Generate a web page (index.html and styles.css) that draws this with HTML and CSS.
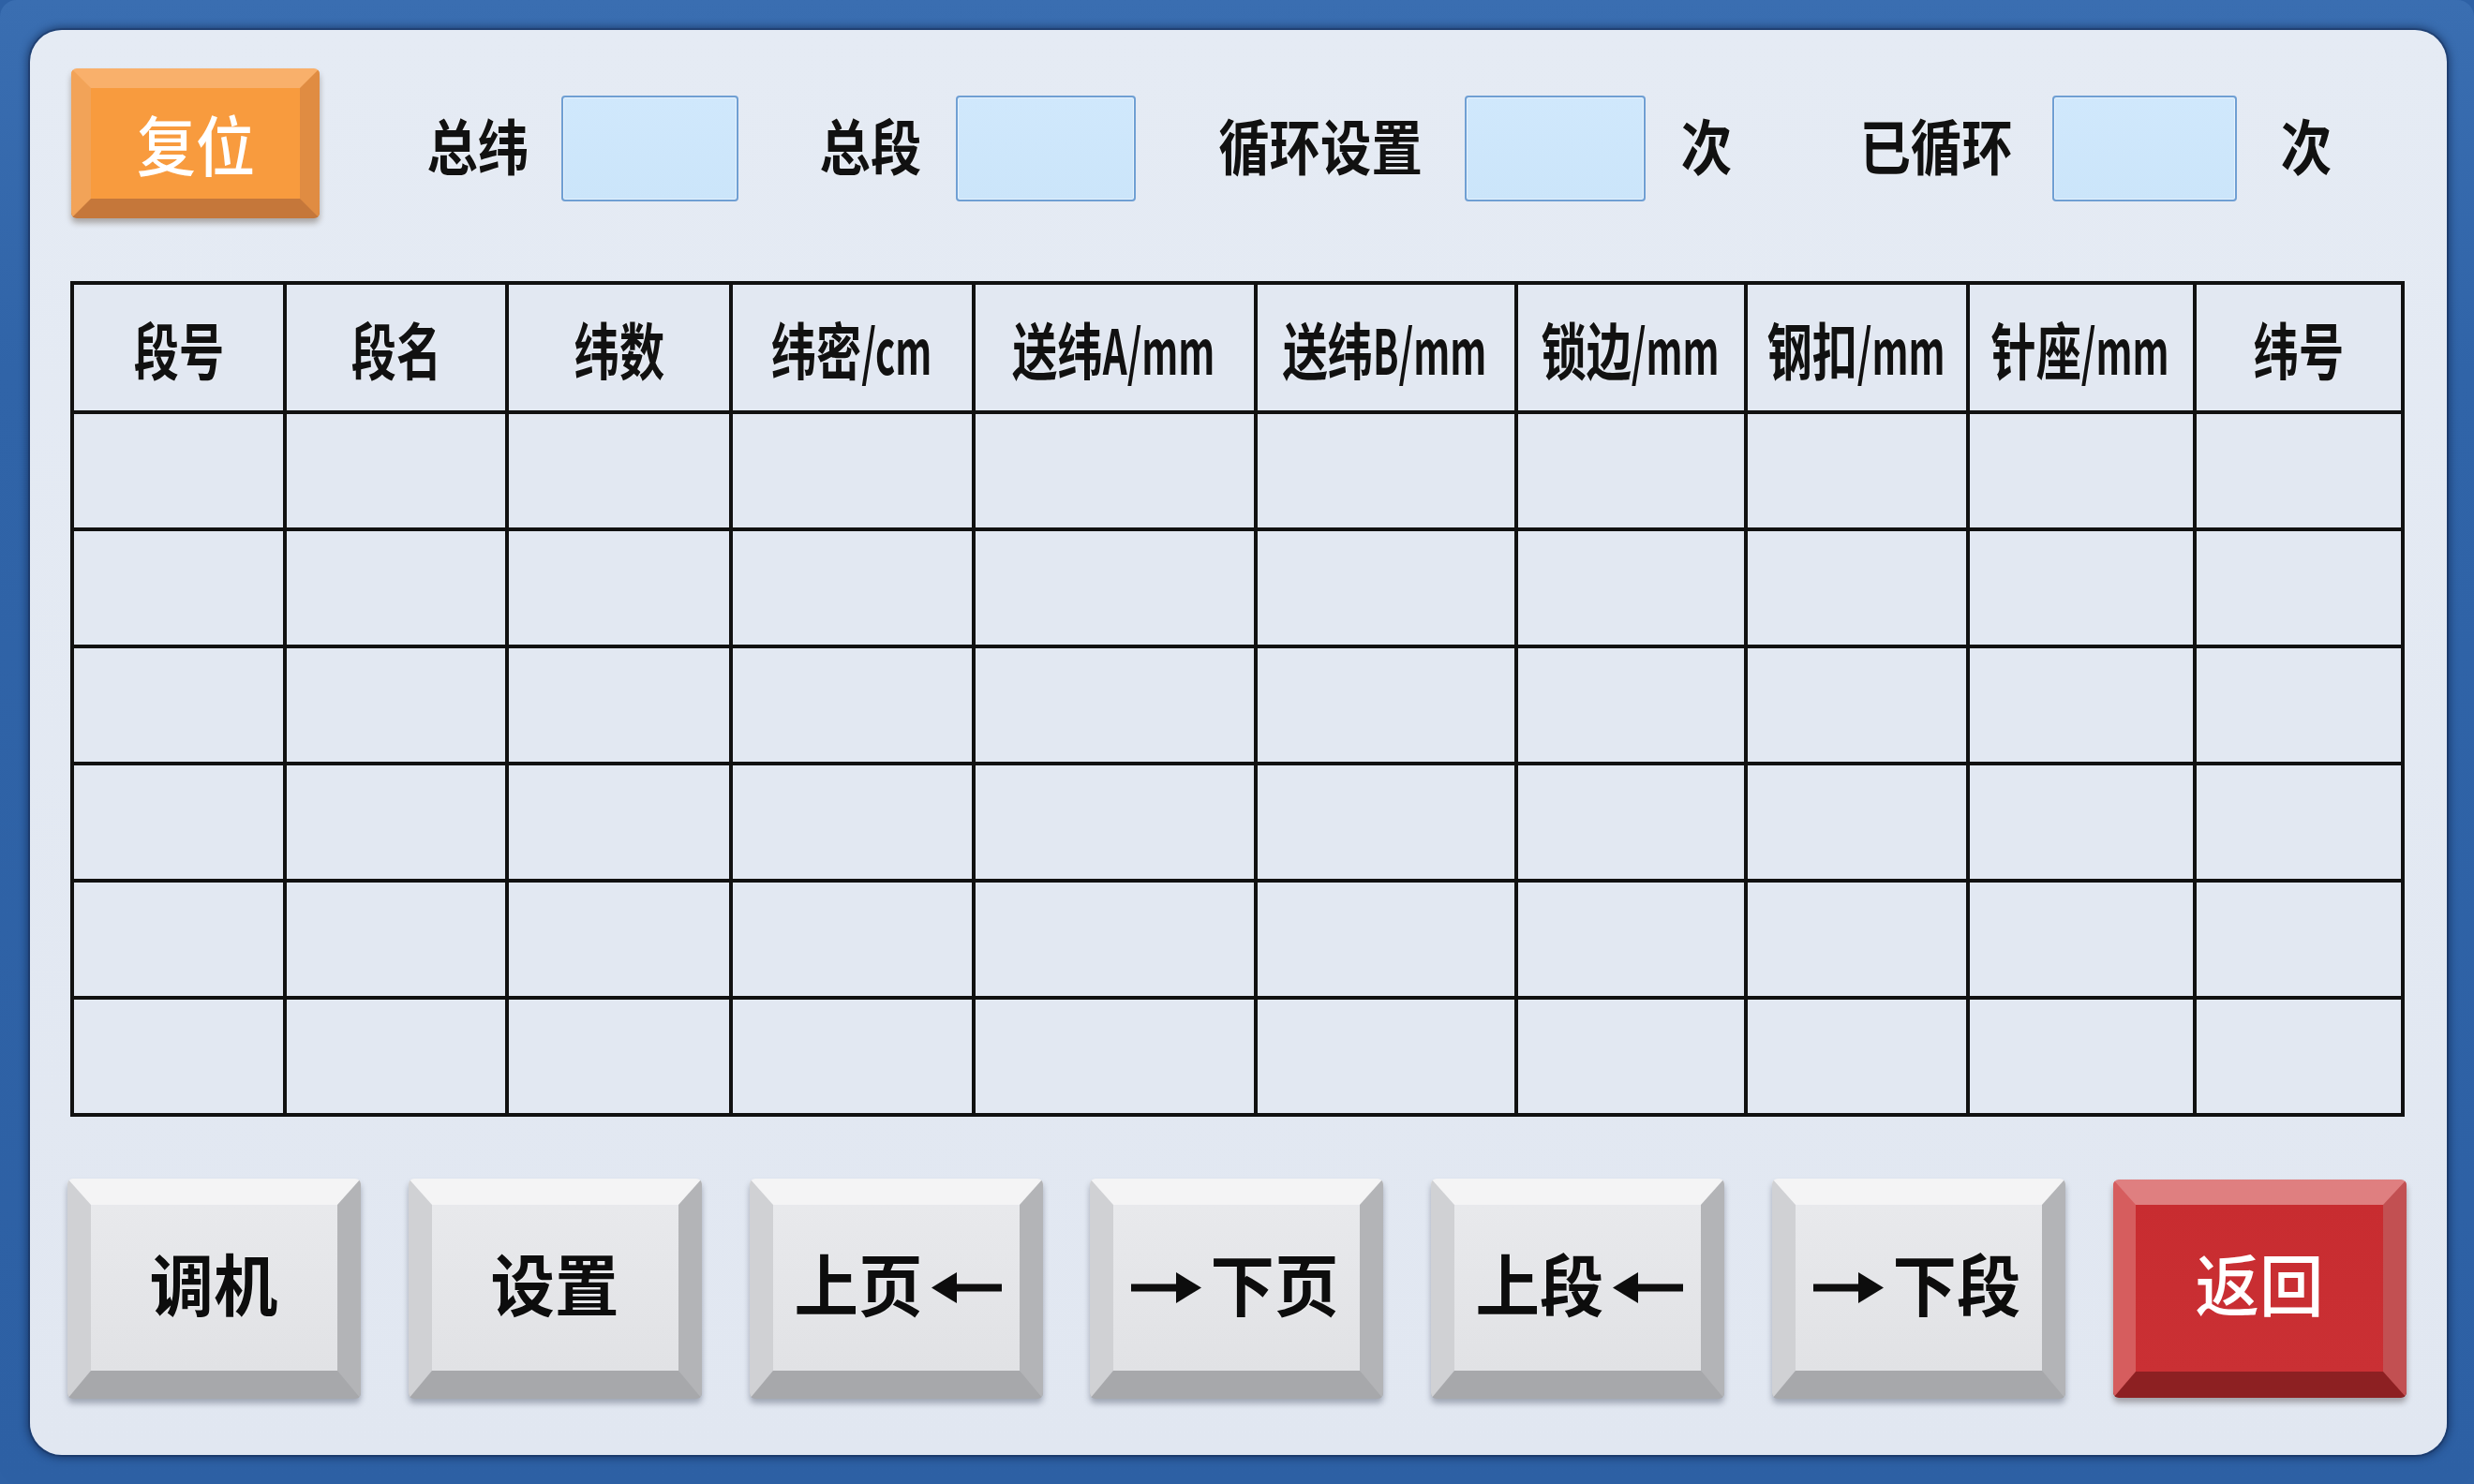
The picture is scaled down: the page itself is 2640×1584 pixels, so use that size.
FILE: index.html
```html
<!DOCTYPE html>
<html lang="zh-CN">
<head>
<meta charset="utf-8">
<title>段设置</title>
<link rel="stylesheet" href="styles.css">
</head>
<body>
<div class="frame">
  <div class="panel">
    <div class="toprow">
      <div class="key key-orange reset"><span class="rt">复位</span></div>
      <div class="lbl l1"><span>总纬</span></div>
      <div class="field f1"></div>
      <div class="lbl l2"><span>总段</span></div>
      <div class="field f2"></div>
      <div class="lbl l3"><span>循环设置</span></div>
      <div class="field f3"></div>
      <div class="lbl l4"><span>次</span></div>
      <div class="lbl l5"><span>已循环</span></div>
      <div class="field f4"></div>
      <div class="lbl l6"><span>次</span></div>
    </div>

    <div class="grid">
      <div class="hc"><span>段号</span></div>
      <div class="hc"><span>段名</span></div>
      <div class="hc"><span>纬数</span></div>
      <div class="hc"><span>纬密<i class="la la-cm">/cm</i></span></div>
      <div class="hc"><span>送纬<i class="la la-amm">A/mm</i></span></div>
      <div class="hc"><span>送纬<i class="la la-amm">B/mm</i></span></div>
      <div class="hc"><span>锁边<i class="la la-mm">/mm</i></span></div>
      <div class="hc"><span>钢扣<i class="la la-mm">/mm</i></span></div>
      <div class="hc"><span>针座<i class="la la-mm">/mm</i></span></div>
      <div class="hc"><span>纬号</span></div>

      <div class="c"></div><div class="c"></div><div class="c"></div><div class="c"></div><div class="c"></div><div class="c"></div><div class="c"></div><div class="c"></div><div class="c"></div><div class="c"></div>
      <div class="c"></div><div class="c"></div><div class="c"></div><div class="c"></div><div class="c"></div><div class="c"></div><div class="c"></div><div class="c"></div><div class="c"></div><div class="c"></div>
      <div class="c"></div><div class="c"></div><div class="c"></div><div class="c"></div><div class="c"></div><div class="c"></div><div class="c"></div><div class="c"></div><div class="c"></div><div class="c"></div>
      <div class="c"></div><div class="c"></div><div class="c"></div><div class="c"></div><div class="c"></div><div class="c"></div><div class="c"></div><div class="c"></div><div class="c"></div><div class="c"></div>
      <div class="c"></div><div class="c"></div><div class="c"></div><div class="c"></div><div class="c"></div><div class="c"></div><div class="c"></div><div class="c"></div><div class="c"></div><div class="c"></div>
      <div class="c"></div><div class="c"></div><div class="c"></div><div class="c"></div><div class="c"></div><div class="c"></div><div class="c"></div><div class="c"></div><div class="c"></div><div class="c"></div>
    </div>

    <div class="btnrow">
      <div class="key key-gray"><div class="kt"><span class="tx">调机</span></div></div>
      <div class="key key-gray"><div class="kt"><span class="tx">设置</span></div></div>
      <div class="key key-gray"><div class="kt"><span class="tx">上页</span>
        <svg class="arr" viewBox="0 0 75 35" width="75" height="35"><path d="M0 17.5 L27 1 L27 34 Z"/><rect x="24" y="13.5" width="51" height="8"/></svg></div></div>
      <div class="key key-gray"><div class="kt">
        <svg class="arr" viewBox="0 0 75 35" width="75" height="35"><path d="M75 17.5 L48 1 L48 34 Z"/><rect x="0" y="13.5" width="51" height="8"/></svg><span class="tx">下页</span></div></div>
      <div class="key key-gray"><div class="kt"><span class="tx">上段</span>
        <svg class="arr" viewBox="0 0 75 35" width="75" height="35"><path d="M0 17.5 L27 1 L27 34 Z"/><rect x="24" y="13.5" width="51" height="8"/></svg></div></div>
      <div class="key key-gray"><div class="kt">
        <svg class="arr" viewBox="0 0 75 35" width="75" height="35"><path d="M75 17.5 L48 1 L48 34 Z"/><rect x="0" y="13.5" width="51" height="8"/></svg><span class="tx">下段</span></div></div>
      <div class="key key-red"><div class="kt"><span class="tx wt">返回</span></div></div>
    </div>
  </div>
</div>
</body>
</html>
```

FILE: styles.css
```css
html, body {
  margin: 0;
  padding: 0;
}

body {
  background: #2e61a5;
  font-family: "Noto Sans CJK SC", "Noto Sans", sans-serif;
}

.frame {
  width: 2640px;
  height: 1584px;
  box-sizing: border-box;
  padding: 32px 29px 31px 32px;
  background: linear-gradient(180deg, #3a6eb1 0%, #3064a8 25%, #2d60a4 100%);
  border-radius: 18px;
  overflow: hidden;
}

.panel {
  height: 100%;
  box-sizing: border-box;
  border-radius: 34px;
  background: linear-gradient(180deg, #e5ebf4 0%, #e1e7f1 100%);
  padding: 41px 0 0 43px;
  box-shadow: 0 0 0 2px rgba(20, 40, 80, 0.35), 0 0 8px 3px rgba(10, 25, 60, 0.55);
}

/* ---------- top row ---------- */
.toprow {
  display: flex;
  align-items: center;
  height: 160px;
}

.lbl {
  display: flex;
  justify-content: center;
  align-items: center;
  height: 80px;
  font-size: 64px;
  font-weight: 700;
  line-height: 1;
  color: #111;
  white-space: nowrap;
}

.lbl span {
  display: inline-block;
  transform: scaleX(0.85);
  text-shadow: 0 0 2px rgba(255, 255, 255, 0.9);
}

.l1 { margin-left: 117px; width: 103px; }
.l2 { margin-left: 88px; width: 106px; }
.l3 { margin-left: 91px; width: 211px; }
.l4 { margin-left: 39px; width: 52px; }
.l5 { margin-left: 140px; width: 158px; }
.l6 { margin-left: 48px; width: 51px; }

.field {
  height: 113px;
  margin-top: 10px;
  box-sizing: border-box;
  background: linear-gradient(180deg, #d0e8fc 0%, #cbe5fa 100%);
  border: 2px solid #6f9fd3;
  border-radius: 4px;
  box-shadow: inset 0 0 0 1px rgba(255, 255, 255, 0.5);
}

.f1 { margin-left: 38px; width: 189px; }
.f2 { margin-left: 38px; width: 192px; }
.f3 { margin-left: 49px; width: 193px; }
.f4 { margin-left: 45px; width: 197px; }

/* ---------- bevelled keys ---------- */
.key {
  box-sizing: border-box;
  display: flex;
  justify-content: center;
  align-items: center;
  border-style: solid;
  border-radius: 6px;
  background-clip: padding-box;
}

.key-gray {
  width: 313px;
  height: 235px;
  border-width: 28px 25px 30px 25px;
  border-color: #f4f4f5 #b3b4b7 #a7a8ab #d0d1d4;
  background-color: #e4e5e8;
  background-image: linear-gradient(180deg, #e8e9ec 0%, #e1e2e5 100%);
  box-shadow: 0 5px 6px rgba(40, 50, 70, 0.35);
}

.key-red {
  width: 313px;
  height: 233px;
  border-width: 27px 25px 28px 24px;
  border-color: #df7f80 #c25052 #8d2022 #d65d5e;
  background-color: #c92e32;
  background-image: linear-gradient(180deg, #c82c30 0%, #ca3034 100%);
  box-shadow: 0 5px 6px rgba(40, 30, 30, 0.35);
}

.key-orange {
  width: 265px;
  height: 160px;
  border-width: 21px;
  border-color: #f9b06b #e08c42 #c5773a #f2a358;
  background-color: #f89b3e;
  box-shadow: 0 5px 6px rgba(60, 40, 20, 0.35);
}

.reset {
  margin-left: 1px;
}

.rt {
  display: inline-block;
  font-size: 70px;
  font-weight: 500;
  line-height: 1;
  color: #fff;
  transform: scaleX(0.9);
  white-space: nowrap;
}

.kt {
  display: flex;
  align-items: center;
  gap: 6px;
  line-height: 1;
}

.tx {
  display: inline-block;
  font-size: 72px;
  font-weight: 700;
  color: #0d0d0d;
  transform: translateY(-7px) scaleX(0.95);
  white-space: nowrap;
  text-shadow: 0 0 2px rgba(255, 255, 255, 0.9);
}

.tx.wt {
  color: #fff;
  font-weight: 500;
  text-shadow: none;
}

.arr {
  display: block;
  fill: #0d0d0d;
  flex: none;
}

/* ---------- table ---------- */
.grid {
  display: grid;
  grid-template-columns: 223px 233px 235px 255px 297px 274px 241px 233px 238px 218px;
  grid-template-rows: 134px repeat(6, 121px);
  gap: 4px;
  width: max-content;
  background: #111;
  border: 4px solid #111;
  margin-top: 67px;
}

.hc, .c {
  background: #e2e8f2;
}

.hc {
  display: flex;
  justify-content: center;
  align-items: center;
  font-size: 66px;
  font-weight: 700;
  line-height: 1;
  color: #111;
  white-space: nowrap;
}

.hc span {
  display: inline-block;
  transform: scaleX(0.73);
  text-shadow: 0 0 2px rgba(255, 255, 255, 0.9);
}

.la {
  display: inline-block;
  font-style: normal;
  transform: scaleX(0.84);
  transform-origin: left center;
}

.la-mm { margin-right: -0.33em; }
.la-cm { margin-right: -0.27em; }
.la-amm { margin-right: -0.43em; }

/* ---------- bottom buttons ---------- */
.btnrow {
  display: flex;
  justify-content: space-between;
  align-items: center;
  width: 2496px;
  margin: 66px 0 0 -3px;
}
```
